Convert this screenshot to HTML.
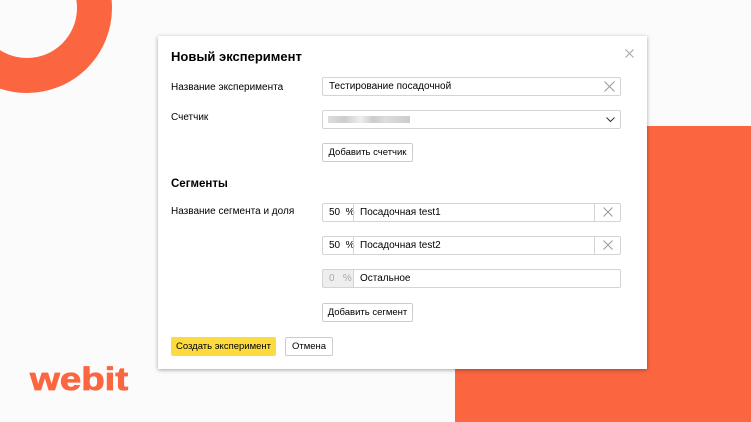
<!DOCTYPE html><html><head><style>
body{margin:0;width:751px;height:422px;background:#fbfbfb;position:relative;overflow:hidden;font-family:"Liberation Sans",Arial,sans-serif;color:#000}
.ring{position:absolute;left:-58px;top:-77px;width:170px;height:170px;border-radius:50%;box-sizing:border-box;border:35px solid #fb6640}
.rect{position:absolute;left:455px;top:126px;width:296px;height:296px;background:#fb6640}
.logo{position:absolute;left:30px;top:361px;font-size:32px;line-height:36px;font-weight:bold;color:#fb6640;transform:scaleX(1.2);transform-origin:left;-webkit-text-stroke:0.8px #fb6640}
.modal{position:absolute;left:158px;top:36px;width:489px;height:333px;background:#fff;box-shadow:0 1px 4px rgba(0,0,0,.35)}
.a{position:absolute;font-size:10px}
.in{position:absolute;box-sizing:border-box;border:1px solid #d4d4d4;background:#fff;height:19px;font-size:10px;line-height:18px;padding-left:6px;border-radius:2px}
.btn{position:absolute;box-sizing:border-box;border:1px solid #ccc;background:#fff;height:19px;font-size:9.5px;line-height:18px;text-align:center;border-radius:2px}
.sx{position:absolute}
.cell{position:absolute;right:0;top:-1px;width:26px;height:19px;box-sizing:border-box;border-left:1px solid #d4d4d4}
.seg{position:absolute;left:30px;top:-1px;height:19px;border-left:1px solid #d4d4d4;padding-left:6px;line-height:19px;color:#000}
</style></head><body>
<div class="ring"></div><div class="rect"></div>
<div class="logo">webit</div>
<div class="modal">
<div class="a" style="left:13px;top:13px;font-size:13px;font-weight:bold">Новый эксперимент</div>
<svg class="sx" style="left:467px;top:13px" width="9" height="9"><path d="M0.5 0.5L8.5 8.5M8.5 0.5L0.5 8.5" stroke="#aaa" stroke-width="1.2"/></svg>
<div class="a" style="left:13px;top:46px">Название эксперимента</div>
<div class="in" style="left:164px;top:41px;width:299px">Тестирование посадочной<svg class="sx" style="right:5px;top:3px" width="11" height="11"><path d="M0.5 0.5L10.5 10.5M10.5 0.5L0.5 10.5" stroke="#999" stroke-width="1"/></svg></div>
<div class="a" style="left:13px;top:76px">Счетчик</div>
<div class="in" style="left:164px;top:74px;width:299px"><span style="position:absolute;left:5px;top:5px;width:82px;height:7px;background:linear-gradient(90deg,#ddd,#ccc 20%,#eee 40%,#ccc 55%,#ddd 70%,#ccc)"></span><svg class="sx" style="right:5px;top:6px" width="9" height="6"><path d="M0.5 0.5L4.5 4.5L8.5 0.5" stroke="#333" fill="none" stroke-width="1"/></svg></div>
<div class="btn" style="left:164px;top:107px;width:91px">Добавить счетчик</div>
<div class="a" style="left:13px;top:142px;font-size:11.5px;font-weight:bold">Сегменты</div>
<div class="a" style="left:13px;top:170px">Название сегмента и доля</div>
<div class="in" style="left:164px;top:167px;width:299px;padding-left:6px">50 &nbsp;%<span class="seg">Посадочная test1</span><span class="cell"><svg class="sx" style="left:8px;top:4px" width="10" height="10"><path d="M0.5 0.5L9.5 9.5M9.5 0.5L0.5 9.5" stroke="#999" stroke-width="1"/></svg></span></div>
<div class="in" style="left:164px;top:200px;width:299px;padding-left:6px">50 &nbsp;%<span class="seg">Посадочная test2</span><span class="cell"><svg class="sx" style="left:8px;top:4px" width="10" height="10"><path d="M0.5 0.5L9.5 9.5M9.5 0.5L0.5 9.5" stroke="#999" stroke-width="1"/></svg></span></div>
<div class="in" style="left:164px;top:233px;width:299px;padding-left:6px;background:linear-gradient(90deg,#eee 30px,#fff 30px);color:#aaa">0 &nbsp;&nbsp;%<span class="seg">Остальное</span></div>
<div class="btn" style="left:164px;top:267px;width:91px">Добавить сегмент</div>
<div class="btn" style="left:13px;top:301px;width:105px;background:#fddb3f;border-color:#fddb3f">Создать эксперимент</div>
<div class="btn" style="left:127px;top:301px;width:48px">Отмена</div>
</div>
</body></html>
